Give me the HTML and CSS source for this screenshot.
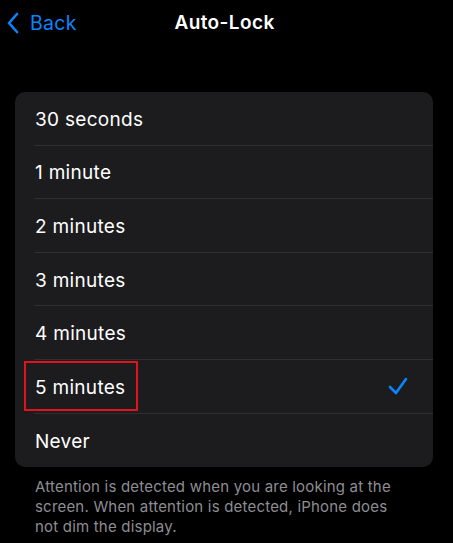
FILE: index.html
```html
<!DOCTYPE html>
<html lang="en">
<head>
    <meta charset="UTF-8">
    <meta name="viewport" content="width=device-width, initial-scale=1.0">
    <title>Auto-Lock</title>
    <link rel="stylesheet" href="styles.css">
</head>
<body>
    <div class="nav">
        <div class="back">
            <svg class="chevron" width="14" height="22" viewBox="0 0 14 22">
                <path d="M11 2 L3 11 L11 20" fill="none" stroke="#0a84ff" stroke-width="2.6" stroke-linecap="round" stroke-linejoin="round"/>
            </svg>
            <span>Back</span>
        </div>
        <div class="title">Auto-Lock</div>
    </div>

    <div class="list">
        <div class="row"><span class="label">30 seconds</span></div>
        <div class="row"><span class="label">1 minute</span></div>
        <div class="row"><span class="label">2 minutes</span></div>
        <div class="row"><span class="label">3 minutes</span></div>
        <div class="row"><span class="label">4 minutes</span></div>
        <div class="row selected">
            <span class="label highlight">5 minutes</span>
            <svg class="check" width="22" height="20" viewBox="0 0 22 20">
                <path d="M3 11 L9 17 L19 3" fill="none" stroke="#0a84ff" stroke-width="2.6" stroke-linecap="round" stroke-linejoin="round"/>
            </svg>
        </div>
        <div class="row"><span class="label">Never</span></div>
    </div>

    <p class="footer">Attention is detected when you are looking at the screen. When attention is detected, iPhone does not dim the display.</p>
</body>
</html>
```

FILE: styles.css
```css
body {
    font-family: Inter, "Noto Sans", sans-serif;
    margin: 0;
    background-color: #000;
    color: #fff;
}

.nav {
    position: relative;
    height: 44px;
    display: flex;
    align-items: center;
    justify-content: center;
}

.back {
    position: absolute;
    left: 6px;
    top: 11px;
    display: flex;
    align-items: center;
    gap: 10px;
    color: #0a84ff;
    font-size: 19.5px;
    letter-spacing: 0.3px;
}

.title {
    font-size: 19px;
    font-weight: 600;
    letter-spacing: 0.4px;
    margin-left: -4px;
}

.list {
    margin: 48px 20px 0 15px;
    background-color: #1c1c1e;
    border-radius: 10px;
    overflow: hidden;
}

.row {
    height: 53.6px;
    display: flex;
    align-items: center;
    justify-content: space-between;
    margin-left: 19px;
    padding-right: 24px;
    border-bottom: 1px solid #2f2f31;
    box-sizing: border-box;
    position: relative;
}

.row:last-child {
    border-bottom: none;
}

.label {
    font-size: 19px;
    letter-spacing: 0.3px;
    padding-left: 1px;
    padding-top: 2px;
}

.highlight {
    position: relative;
}

.highlight::after {
    content: "";
    position: absolute;
    left: -10px;
    top: -13px;
    width: 110px;
    height: 46px;
    border: 2px solid #e0141b;
}

.footer {
    margin: 10px 50px 0 35px;
    font-size: 15px;
    line-height: 20px;
    letter-spacing: 0.2px;
    color: #8d8d93;
}
```
